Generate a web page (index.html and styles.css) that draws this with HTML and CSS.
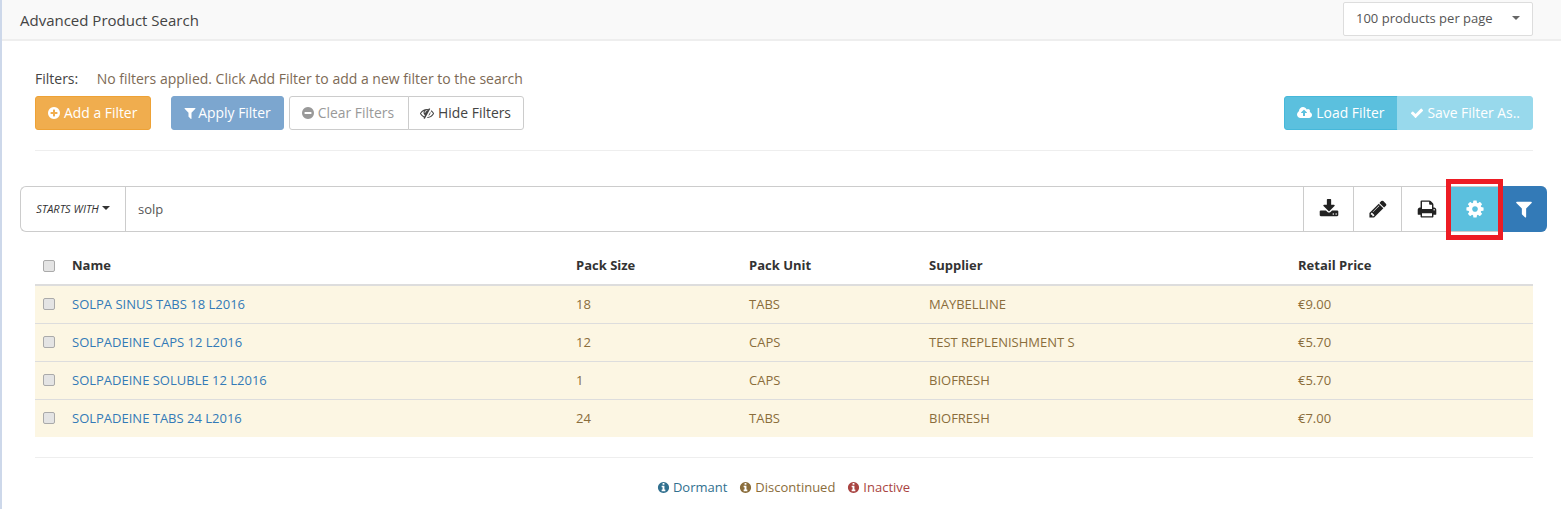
FILE: index.html
```html
<!DOCTYPE html>
<html lang="en">
<head>
<meta charset="UTF-8" />
<title>Advanced Product Search</title>
<link rel="stylesheet" href="styles.css">
</head>
<body>
  <svg class="icon-defs" width="0" height="0">
    <symbol id="i-plus" viewBox="128 0 1536 1792"><path d="M1344 960v-128q0-26-19-45t-45-19h-256v-256q0-26-19-45t-45-19h-128q-26 0-45 19t-19 45v256h-256q-26 0-45 19t-19 45v128q0 26 19 45t45 19h256v256q0 26 19 45t45 19h128q26 0 45-19t19-45v-256h256q26 0 45-19t19-45zm320-64q0 209-103 385.5t-279.5 279.5-385.5 103-385.5-103-279.5-279.5-103-385.5 103-385.5 279.5-279.5 385.5-103 385.5 103 279.5 279.5 103 385.5z"/></symbol>
    <symbol id="i-minus" viewBox="128 0 1536 1792"><path d="M1344 960v-128q0-26-19-45t-45-19h-768q-26 0-45 19t-19 45v128q0 26 19 45t45 19h768q26 0 45-19t19-45zm320-64q0 209-103 385.5t-279.5 279.5-385.5 103-385.5-103-279.5-279.5-103-385.5 103-385.5 279.5-279.5 385.5-103 385.5 103 279.5 279.5 103 385.5z"/></symbol>
    <symbol id="i-filter" viewBox="128 0 1536 1792"><path d="M1595 295q17 41-14 70l-493 493v742q0 42-39 59-13 5-25 5-27 0-45-19l-256-256q-19-19-19-45v-486l-493-493q-31-29-14-70 17-39 59-39h1280q42 0 59 39z"/></symbol>
    <symbol id="i-eye-slash" viewBox="0 0 1792 1792"><path d="M555 1335l78-141q-87-63-136-159t-49-203q0-121 61-225-229 117-381 353 167 258 427 375zm389-759q0-20-14-34t-34-14q-125 0-214.5 89.5t-89.5 214.5q0 20 14 34t34 14 34-14 14-34q0-86 61-147t147-61q20 0 34-14t14-34zm363-191q0 7-1 9-106 189-316 567t-315 566l-49 89q-10 16-28 16-12 0-134-70-16-10-16-28 0-12 44-87-143-65-263.5-173t-208.5-245q-20-31-20-69t20-69q153-235 380-371t496-136q89 0 180 17l54-97q10-16 28-16 5 0 18 6t31 15.5 33 18.5 31.5 18.5 19.5 11.5q16 10 16 27zm37 447q0 139-79 253.5t-209 164.5l280-502q8 45 8 84zm448 128q0 35-20 69-39 64-109 145-150 172-347.5 267t-419.5 95l74-132q212-18 392.5-137t301.5-307q-115-179-282-294l63-112q95 64 182.5 153t144.5 184q20 34 20 69z"/></symbol>
    <symbol id="i-cloud" viewBox="0 0 1920 1792"><path d="M1216 864q0-14-9-23l-352-352q-9-9-23-9t-23 9l-351 351q-10 12-10 24 0 14 9 23t23 9h224v352q0 13 9.5 22.5t22.5 9.5h192q13 0 22.5-9.5t9.5-22.5v-352h224q13 0 22.5-9.5t9.5-22.5zm640 288q0 159-112.5 271.5t-271.5 112.5h-1088q-185 0-316.5-131.5t-131.5-316.5q0-130 70-240t188-165q-2-30-2-43 0-212 150-362t362-150q156 0 285.5 87t188.5 231q71-62 166-62 106 0 181 75t75 181q0 76-41 138 130 31 213.5 135.5t83.5 238.5z"/></symbol>
    <symbol id="i-check" viewBox="0 0 1792 1792"><path d="M1671 566q0 40-28 68l-724 724-136 136q-28 28-68 28t-68-28l-136-136-362-362q-28-28-28-68t28-68l136-136q28-28 68-28t68 28l294 295 656-657q28-28 68-28t68 28l136 136q28 28 28 68z"/></symbol>
    <symbol id="i-download" viewBox="0 0 1792 1792"><path d="M1344 1344q0-26-19-45t-45-19-45 19-19 45 19 45 45 19 45-19 19-45zm256 0q0-26-19-45t-45-19-45 19-19 45 19 45 45 19 45-19 19-45zm128-224v320q0 40-28 68t-68 28h-1472q-40 0-68-28t-28-68v-320q0-40 28-68t68-28h465l135 136q58 56 136 56t136-56l136-136h464q40 0 68 28t28 68zm-325-569q17 41-14 70l-448 448q-18 19-45 19t-45-19l-448-448q-31-29-14-70 17-39 59-39h256v-448q0-26 19-45t45-19h256q26 0 45 19t19 45v448h256q42 0 59 39z"/></symbol>
    <symbol id="i-pencil" viewBox="0 0 1792 1792"><path d="M491 1536l91-91-235-235-91 91v107h128v128h107zm523-928q0-22-22-22-10 0-17 7l-542 542q-7 7-7 17 0 22 22 22 10 0 17-7l542-542q7-7 7-17zm-54-192l416 416-832 832h-416v-416zm683 96q0 53-37 90l-166 166-416-416 166-165q36-38 90-38 53 0 91 38l235 234q37 39 37 91z"/></symbol>
    <symbol id="i-print" viewBox="0 0 1792 1792"><path d="M448 1536h896v-256h-896v256zm0-640h896v-384h-160q-40 0-68-28t-28-68v-160h-640v640zm1152 64q0-26-19-45t-45-19-45 19-19 45 19 45 45 19 45-19 19-45zm128 0v416q0 13-9.5 22.5t-22.5 9.5h-224v160q0 40-28 68t-68 28h-960q-40 0-68-28t-28-68v-160h-224q-13 0-22.5-9.5t-9.5-22.5v-416q0-79 56.5-135.5t135.5-56.5h64v-544q0-40 28-68t68-28h672q40 0 88 20t76 48l152 152q28 28 48 76t20 88v256h64q79 0 135.5 56.5t56.5 135.5z"/></symbol>
    <symbol id="i-cog" viewBox="0 0 1792 1792"><path d="M1152 896q0-106-75-181t-181-75-181 75-75 181 75 181 181 75 181-75 75-181zm512-109v222q0 12-8 23t-20 13l-185 28q-19 54-39 91 35 50 107 138 10 12 10 25t-9 23q-27 37-99 108t-94 71q-12 0-26-9l-138-108q-44 23-91 38-16 136-29 186-7 28-36 28h-222q-14 0-24.5-8.5t-11.5-21.5l-28-184q-49-16-90-37l-141 107q-10 9-25 9-14 0-25-11-126-114-165-168-7-10-7-23 0-12 8-23 15-21 51-66.5t54-70.5q-27-50-41-99l-183-27q-13-2-21-12.5t-8-23.5v-222q0-12 8-23t19-13l186-28q14-46 39-92-40-57-107-138-10-12-10-24 0-10 9-23 26-36 98.5-107.5t94.5-71.5q13 0 26 10l138 107q44-23 91-38 16-136 29-186 7-28 36-28h222q14 0 24.5 8.5t11.5 21.5l28 184q49 16 90 37l142-107q9-9 24-9 13 0 25 10 129 119 165 170 7 8 7 22 0 12-8 23-15 21-51 66.5t-54 70.5q26 50 41 98l183 28q13 2 21 12.5t8 23.5z"/></symbol>
    <symbol id="i-info" viewBox="0 0 1792 1792"><path d="M1152 1376v-160q0-14-9-23t-23-9h-96v-512q0-14-9-23t-23-9h-320q-14 0-23 9t-9 23v160q0 14 9 23t23 9h96v320h-96q-14 0-23 9t-9 23v160q0 14 9 23t23 9h448q14 0 23-9t9-23zm-128-896v-160q0-14-9-23t-23-9h-192q-14 0-23 9t-9 23v160q0 14 9 23t23 9h192q14 0 23-9t9-23zm640 416q0 209-103 385.5t-279.5 279.5-385.5 103-385.5-103-279.5-279.5-103-385.5 103-385.5 279.5-279.5 385.5-103 385.5 103 279.5 279.5 103 385.5z"/></symbol>
  </svg>

  <header class="topbar">
    <span class="topbar-title">Advanced Product Search</span>
    <div class="per-page">100 products per page <span class="caret caret-grey"></span></div>
  </header>

  <section class="filters">
    <p class="filters-line"><span class="filters-label">Filters:</span> <span class="filters-msg">No filters applied. Click Add Filter to add a new filter to the search</span></p>
    <div class="filters-actions">
      <button class="btn btn-orange"><svg class="ico ico-round"><use href="#i-plus"/></svg>Add a Filter</button>
      <button class="btn btn-blue-off apply"><svg class="ico ico-round"><use href="#i-filter"/></svg>Apply Filter</button>
      <div class="btn-group">
        <button class="btn btn-white btn-muted"><svg class="ico ico-round"><use href="#i-minus"/></svg>Clear Filters</button>
        <button class="btn btn-white btn-hide"><svg class="ico"><use href="#i-eye-slash"/></svg>Hide Filters</button>
      </div>
      <div class="btn-group push-right">
        <button class="btn btn-cyan"><svg class="ico ico-cloud"><use href="#i-cloud"/></svg>Load Filter</button>
        <button class="btn btn-cyan-off"><svg class="ico"><use href="#i-check"/></svg>Save Filter As..</button>
      </div>
    </div>
  </section>

  <div class="searchbar">
    <div class="starts-with">STARTS WITH <span class="caret"></span></div>
    <div class="search-text">solp</div>
    <button class="tool tool-download"><svg class="ico"><use href="#i-download"/></svg></button>
    <button class="tool tool-edit"><svg class="ico"><use href="#i-pencil"/></svg></button>
    <button class="tool tool-print"><svg class="ico"><use href="#i-print"/></svg></button>
    <button class="tool tool-cog"><svg class="ico"><use href="#i-cog"/></svg><span class="highlight"></span></button>
    <button class="tool tool-filter"><svg class="ico"><use href="#i-filter"/></svg></button>
  </div>

  <table class="results">
    <colgroup>
      <col class="c-check"><col class="c-name"><col class="c-size"><col class="c-unit"><col class="c-supplier"><col>
    </colgroup>
    <thead>
      <tr><th><span class="check"></span></th><th>Name</th><th>Pack Size</th><th>Pack Unit</th><th>Supplier</th><th>Retail Price</th></tr>
    </thead>
    <tbody>
      <tr><td><span class="check"></span></td><td><a href="#">SOLPA SINUS TABS 18 L2016</a></td><td>18</td><td>TABS</td><td>MAYBELLINE</td><td>€9.00</td></tr>
      <tr><td><span class="check"></span></td><td><a href="#">SOLPADEINE CAPS 12 L2016</a></td><td>12</td><td>CAPS</td><td>TEST REPLENISHMENT S</td><td>€5.70</td></tr>
      <tr><td><span class="check"></span></td><td><a href="#">SOLPADEINE SOLUBLE 12 L2016</a></td><td>1</td><td>CAPS</td><td>BIOFRESH</td><td>€5.70</td></tr>
      <tr><td><span class="check"></span></td><td><a href="#">SOLPADEINE TABS 24 L2016</a></td><td>24</td><td>TABS</td><td>BIOFRESH</td><td>€7.00</td></tr>
    </tbody>
  </table>

  <footer class="legend">
    <span class="legend-item dormant"><svg class="ico"><use href="#i-info"/></svg>Dormant</span>
    <span class="legend-item discontinued"><svg class="ico"><use href="#i-info"/></svg>Discontinued</span>
    <span class="legend-item inactive"><svg class="ico"><use href="#i-info"/></svg>Inactive</span>
  </footer>
</body>
</html>
```

FILE: styles.css
```css
/* base */
* {
  box-sizing: border-box;
}
html, body {
  height: 509px;
  overflow: hidden;
}
body {
  margin: 0;
  background: #fff;
  border-left: 2px solid #cdd8ea;
  font-family: 'Open Sans', sans-serif;
  font-size: 13px;
  color: #333;
}
.icon-defs {
  position: absolute;
}
.ico {
  width: 14px;
  height: 14px;
  fill: currentColor;
  flex: none;
}
.ico-round {
  width: 12px;
}

/* top bar */
.topbar {
  height: 41px;
  padding: 0 28px 0 18px;
  display: flex;
  justify-content: space-between;
  background: #f9f9f9;
  border-bottom: 2px solid #eee;
}
.topbar-title {
  font-size: 15px;
  line-height: 41px;
  color: #444;
}
.per-page {
  width: 190px;
  height: 34px;
  margin-top: 2px;
  padding: 0 12px 2px;
  display: flex;
  align-items: center;
  justify-content: space-between;
  background: #fff;
  border: 1px solid #ddd;
  border-radius: 2px;
  color: #555;
}
.caret {
  display: inline-block;
  width: 0;
  height: 0;
  border-top: 4px solid #333;
  border-left: 4px solid transparent;
  border-right: 4px solid transparent;
}
.caret-grey {
  border-top-color: #666;
}

/* filters */
.filters {
  margin: 0 28px 0 33px;
  padding: 28px 0 20px;
  border-bottom: 1px solid #eee;
}
.filters-line {
  margin: 0 0 7px;
  line-height: 20px;
  font-size: 14px;
}
.filters-label {
  display: inline-block;
  width: 58px;
  color: #444;
}
.filters-msg {
  color: #7d6a55;
}
.filters-actions {
  display: flex;
}
.btn {
  height: 34px;
  padding: 0 12px 1px;
  display: inline-flex;
  align-items: center;
  gap: 4px;
  border: 1px solid transparent;
  border-radius: 3px;
  font-family: inherit;
  font-size: 13.9px;
  color: #fff;
  white-space: nowrap;
}
.btn .ico {
  margin-top: 1px;
}
.btn-orange {
  padding-right: 13px;
  background: #f0ad4e;
  border-color: #eea236;
}
.btn-blue-off {
  background: #7ca6cf;
  border-color: #7ca6cf;
}
.apply {
  margin-left: 20px;
  margin-right: 5px;
  gap: 2px;
}
.btn-white {
  background: #fff;
  border-color: #ccc;
  color: #444;
}
.btn-muted {
  padding-right: 14px;
  color: #999;
}
.btn-hide {
  padding-left: 11px;
}
.btn-cyan {
  padding-right: 13px;
  gap: 3px;
  background: #5bc0de;
  border-color: #46b8da;
}
.btn-cyan-off {
  gap: 3px;
  background: #98d9ec;
  border-color: #98d9ec;
}
.btn-group {
  display: flex;
}
.btn-group .btn:first-child {
  border-radius: 3px 0 0 3px;
}
.btn-group .btn:last-child {
  border-radius: 0 3px 3px 0;
  margin-left: -1px;
}
.push-right {
  margin-left: auto;
}
.ico-cloud {
  width: 16px;
}

/* search bar */
.searchbar {
  height: 46px;
  margin: 35px 14px 0 18px;
  display: flex;
  border: 1px solid #ccc;
  border-right: none;
  border-radius: 6px;
}
.starts-with {
  width: 105px;
  padding-bottom: 2px;
  display: flex;
  align-items: center;
  justify-content: center;
  gap: 3px;
  border-right: 1px solid #ccc;
  font-size: 11px;
  font-style: italic;
  color: #333;
}
.search-text {
  flex: 1;
  padding-left: 12px;
  line-height: 44px;
  color: #555;
}
.tool {
  width: 50px;
  padding: 0;
  display: flex;
  align-items: center;
  justify-content: center;
  background: #fff;
  border: none;
  border-left: 1px solid #ccc;
  color: #222;
}
.tool .ico {
  width: 20px;
  height: 20px;
}
.tool-edit, .tool-cog, .tool-filter {
  width: 48px;
}
.tool-cog {
  position: relative;
  background: #5bc0de;
  border-left: none;
  color: #fff;
}
.tool-filter {
  margin: -1px 0;
  padding-left: 1px;
  background: #337ab7;
  border-left: none;
  border-radius: 0 6px 6px 0;
  color: #fff;
}
/* red annotation box drawn over the cog button */
.highlight {
  position: absolute;
  top: -8px;
  left: -5px;
  width: 57px;
  height: 61px;
  border: 5px solid #ed1c24;
}

/* table */
.results {
  width: 1498px;
  margin: 15px 0 0 33px;
  border-collapse: collapse;
  table-layout: fixed;
}
.c-check { width: 29px; }
.c-name { width: 504px; }
.c-size { width: 173px; }
.c-unit { width: 180px; }
.c-supplier { width: 369px; }
.results th, .results td {
  padding: 0 8px;
  text-align: left;
}
.results th {
  height: 38px;
  padding-bottom: 2px;
  border-bottom: 2px solid #ddd;
  font-weight: 700;
  color: #333;
}
.results th:first-child {
  padding-bottom: 0;
}
.results td {
  height: 38px;
  background: #fcf6e3;
  border-top: 1px solid #ddd;
  color: #8a6d3b;
}
.results tbody tr:first-child td {
  border-top: none;
}
.results a {
  color: #337ab7;
  text-decoration: none;
}
.check {
  display: block;
  width: 12px;
  height: 12px;
  background: #e4e4e4;
  border: 1px solid #aaa;
  border-radius: 2px;
}

/* legend */
.legend {
  margin: 20px 28px 0 33px;
  padding: 20px 1px 0 0;
  display: flex;
  justify-content: center;
  gap: 12px;
  border-top: 1px solid #eee;
  line-height: 18px;
}
.legend-item {
  display: flex;
  align-items: center;
  gap: 3px;
}
.legend .ico {
  width: 13px;
  height: 13px;
}
.dormant { color: #31708f; }
.discontinued { color: #8a6d3b; }
.inactive { color: #a94442; }
```
